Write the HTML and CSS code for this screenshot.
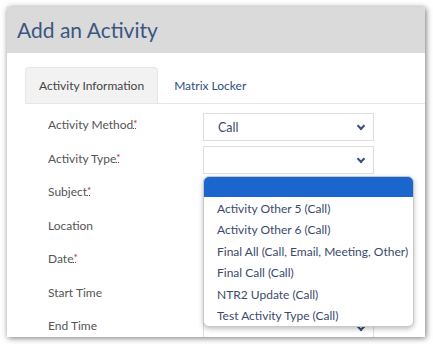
FILE: index.html
```html
<!DOCTYPE html>
<html lang="en">
<head>
    <meta charset="UTF-8">
    <title>Add an Activity</title>
    <link rel="stylesheet" href="styles.css">
</head>
<body>
    <div class="modal">
        <div class="modal-header">
            <h1>Add an Activity</h1>
        </div>
        <div class="modal-body">
            <div class="tabs">
                <div class="tab active">Activity Information</div>
                <div class="tab">Matrix Locker</div>
            </div>

            <div class="form">
                <div class="row">
                    <label>Activity Method<abbr>*</abbr></label>
                    <div class="select">Call<span class="chev"></span></div>
                </div>
                <div class="row">
                    <label>Activity Type<abbr>*</abbr></label>
                    <div class="select"><span class="chev"></span></div>
                </div>
                <div class="row">
                    <label>Subject<abbr>*</abbr></label>
                    <div class="select"></div>
                </div>
                <div class="row">
                    <label>Location</label>
                    <div class="select"></div>
                </div>
                <div class="row">
                    <label>Date<abbr>*</abbr></label>
                    <div class="select"></div>
                </div>
                <div class="row">
                    <label>Start Time</label>
                    <div class="select"></div>
                </div>
                <div class="row">
                    <label>End Time</label>
                    <div class="select"><span class="chev"></span></div>
                </div>

                <!-- open list of the Activity Type select -->
                <ul class="dropdown">
                    <li class="selected">&nbsp;</li>
                    <li>Activity Other 5 (Call)</li>
                    <li>Activity Other 6 (Call)</li>
                    <li>Final All (Call, Email, Meeting, Other)</li>
                    <li>Final Call (Call)</li>
                    <li>NTR2 Update (Call)</li>
                    <li>Test Activity Type (Call)</li>
                </ul>
            </div>
        </div>
    </div>
</body>
</html>
```

FILE: styles.css
```css
body {
    margin: 0;
    background: #fff;
    font-family: Lato, "Open Sans", sans-serif;
}
.modal {
    margin: 7px;
    width: 418px;
    height: 330px;
    overflow: hidden;
    background: #fff;
    box-shadow: 1px 1px 6px rgba(0,0,0,0.55);
}
.modal-header {
    height: 46px;
    background: #dadada;
    display: flex;
    align-items: center;
    padding-left: 10px;
}
.modal-header h1 {
    margin: 0 0 2px 0;
    font-size: 21px;
    font-weight: normal;
    color: #3b5583;
}
.modal-body {
    padding: 14px 0 0 18px;
}
.tabs {
    display: flex;
    border-bottom: 1px solid #e6e6e6;
}
.tab {
    height: 35px;
    line-height: 36px;
    padding: 0 13px;
    font-size: 12px;
    color: #304e7e;
    border: 1px solid transparent;
    border-bottom: none;
}
.tab.active {
    background: #f2f2f2;
    color: #444;
    border-color: #e6e6e6;
    border-radius: 4px 4px 0 0;
    margin-right: 2px;
}
.form {
    position: relative;
    padding: 6px 0 0 23px;
}
.row {
    display: flex;
    align-items: center;
    height: 33.5px;
}
.row label {
    width: 155px;
    font-size: 12px;
    color: #555;
    padding-bottom: 4px;
}
.row abbr {
    color: #b3262a;
    font-size: 10px;
    vertical-align: 2px;
    text-decoration: underline dotted;
}
.select {
    position: relative;
    box-sizing: border-box;
    width: 171px;
    height: 28px;
    line-height: 27px;
    padding-left: 14px;
    border: 1px solid #dedede;
    font-size: 12.5px;
    color: #3b4a6b;
}
.chev {
    position: absolute;
    right: 9px;
    top: 9px;
    width: 4px;
    height: 4px;
    border-right: 2px solid #34507f;
    border-bottom: 2px solid #34507f;
    transform: rotate(45deg);
}
.dropdown {
    position: absolute;
    left: 178px;
    top: 72px;
    width: 209px;
    margin: 0;
    padding: 0;
    list-style: none;
    background: #fff;
    border: 1px solid #c8c8c8;
    border-radius: 6px;
    overflow: hidden;
    box-shadow: 0 2px 5px rgba(0,0,0,0.25);
}
.dropdown li {
    height: 21.4px;
    line-height: 21px;
    padding-left: 13px;
    font-size: 12px;
    color: #3b4a6b;
    white-space: nowrap;
}
.dropdown li.selected {
    background: #1a66cc;
    height: 20px;
    margin-bottom: 1px;
}
```
